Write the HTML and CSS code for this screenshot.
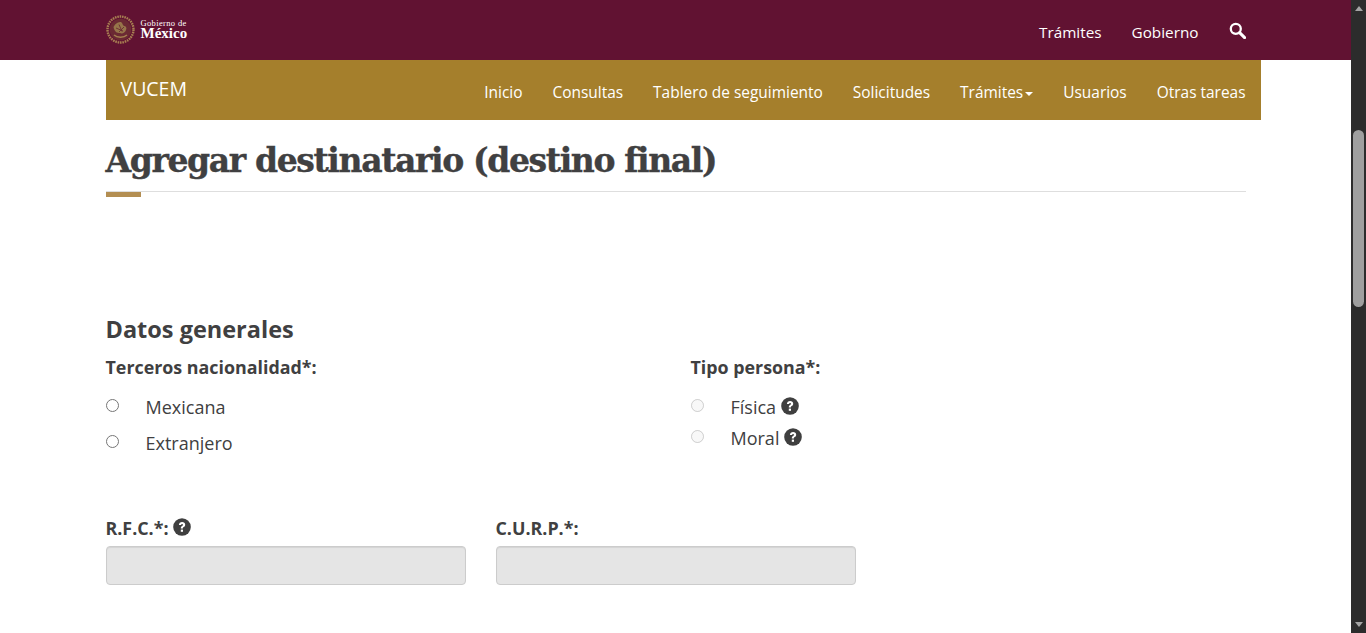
FILE: index.html
```html
<!DOCTYPE html>
<html lang="es">
<head>
<meta charset="utf-8">
<title>Agregar destinatario</title>
<link rel="stylesheet" href="styles.css">
</head>
<body>
<div class="window">
  <div class="page">
    <header class="topbar">
      <div class="topbar-inner">
        <a class="logo" href="#">
          <svg class="seal" width="29" height="29" viewBox="0 0 29 29" aria-hidden="true">
            <circle cx="14.5" cy="14.5" r="13" fill="none" stroke="#a87f52" stroke-width="2.4" stroke-dasharray="1.6 .8"/>
            <circle cx="14.5" cy="14.5" r="10.8" fill="#6b2a33"/>
            <path d="M8 20c3 3 10 3 13 0" fill="none" stroke="#a5814f" stroke-width="1.4"/>
            <path d="M7.5 12c2-4 5-5 7.500-5 2 1 1 3 3 4 2 0 3 2 2 4-1 3-4 4-6 3-3 0-5.500-1-6.500-6z" fill="#96754a"/>
            <path d="M10 13l7 3M13 9.500l3 7M18 12l-5 5" stroke="#6b2a33" stroke-width=".9"/>
          </svg>
          <span class="logo-text"><small>Gobierno de</small><b>México</b></span>
        </a>
        <nav class="topnav">
          <a href="#">Trámites</a>
          <a href="#">Gobierno</a>
          <a href="#" class="search" aria-label="Buscar">
            <svg width="17" height="17" viewBox="0 0 17 17" aria-hidden="true">
              <circle cx="6.8" cy="6.8" r="5" fill="none" stroke="#fff" stroke-width="2.3"/>
              <path d="M10.6 10.6l5 5" stroke="#fff" stroke-width="3" stroke-linecap="round"/>
            </svg>
          </a>
        </nav>
      </div>
    </header>

    <div class="container">
      <nav class="subnav">
        <a class="brand" href="#">VUCEM</a>
        <div class="sublinks">
          <a href="#">Inicio</a>
          <a href="#">Consultas</a>
          <a href="#">Tablero de seguimiento</a>
          <a href="#">Solicitudes</a>
          <a href="#">Trámites<i class="caret"></i></a>
          <a href="#">Usuarios</a>
          <a href="#">Otras tareas</a>
        </div>
      </nav>

      <main class="content">
        <h1 class="title">Agregar destinatario (destino final)</h1>
        <div class="rule"><span></span></div>

        <h2 class="section">Datos generales</h2>

        <div class="radio-row">
          <fieldset class="group">
            <label class="lbl">Terceros nacionalidad*:</label>
            <label class="radio"><input type="radio" name="nac"><span>Mexicana</span></label>
            <label class="radio"><input type="radio" name="nac"><span>Extranjero</span></label>
          </fieldset>
          <fieldset class="group tight">
            <label class="lbl">Tipo persona*:</label>
            <label class="radio"><input type="radio" name="tipo" disabled><span>Física</span>
              <svg class="help" viewBox="0 0 18 18" aria-hidden="true"><use href="#q"/></svg></label>
            <label class="radio"><input type="radio" name="tipo" disabled><span>Moral</span>
              <svg class="help" viewBox="0 0 18 18" aria-hidden="true"><use href="#q"/></svg></label>
          </fieldset>
        </div>

        <div class="field-row">
          <div class="field">
            <label class="lbl">R.F.C.*: <svg class="help" viewBox="0 0 18 18" aria-hidden="true"><use href="#q"/></svg></label>
            <input class="input" type="text" disabled>
          </div>
          <div class="field">
            <label class="lbl">C.U.R.P.*:</label>
            <input class="input" type="text" disabled>
          </div>
        </div>
      </main>
    </div>
  </div>

  <div class="scrollbar" aria-hidden="true">
    <i class="arrow up"></i>
    <div class="track"><div class="thumb"></div></div>
    <i class="arrow down"></i>
  </div>
</div>

<svg width="0" height="0" class="defs" aria-hidden="true">
  <symbol id="q" viewBox="0 0 18 18">
    <circle cx="9" cy="9" r="8.800" fill="#3f3f3f"/>
    <path d="M5.9 7c.1-1.900 1.400-2.900 3.200-2.900 1.800 0 3.100 1 3.100 2.600 0 1.200-.7 1.800-1.500 2.300-.6.4-.8.6-.8 1.200v.4H7.800v-.6c0-1.100.5-1.600 1.200-2.100.6-.4 1-.7 1-1.200 0-.5-.4-.8-.9-.8-.6 0-1 .4-1.100 1.100z" fill="#fff"/>
    <rect x="7.8" y="11.600" width="2.200" height="2.200" fill="#fff"/>
  </symbol>
</svg>
</body>
</html>
```
FILE: styles.css
```css
* { box-sizing: border-box; }
html, body { margin: 0; padding: 0; height: 100%; overflow: hidden; }
body { font-family: "Open Sans", "Noto Sans", sans-serif; font-size: 18px; color: #404041; background: #fff; }
a { color: inherit; text-decoration: none; }
.defs { position: absolute; }

.window { display: flex; height: 633px; }
.page { flex: 0 0 1351px; width: 1351px; overflow: hidden; }

.topbar { background: #611232; height: 60px; }
.topbar-inner { width: 1170px; height: 60px; margin: 0 auto; padding: 0 15px; display: flex; align-items: center; justify-content: space-between; }
.logo { display: flex; align-items: center; gap: 6px; color: #fff; margin-top: -1px; }
.seal { display: block; }
.logo-text { display: flex; flex-direction: column; font-family: "Liberation Serif", serif; line-height: 1; }
.logo-text small { font-size: 8.500px; line-height: 8px; letter-spacing: .35px; white-space: nowrap; }
.logo-text b { font-size: 15px; line-height: 13px; font-weight: 700; letter-spacing: 0; }

.topnav { display: flex; align-items: center; gap: 30px; font-size: 15.300px; color: #fff; margin-top: 4px; }
.topnav .search { display: block; height: 17px; margin-top: -4px; }
.topnav .search svg { display: block; }

.container { width: 1170px; margin: 0 auto; padding: 0 15px; }
.subnav { height: 60px; width: 1155px; background: #a57f2c; color: #fff; display: flex; justify-content: space-between; padding: 0 15px; font-size: 15.450px; }
.brand { font-size: 19.500px; line-height: 27px; padding-top: 15px; }
.sublinks { display: flex; gap: 30px; padding-top: 21px; line-height: 22px; }
.caret { display: inline-block; width: 0; height: 0; margin-left: 2px; vertical-align: middle; border-top: 4px solid #fff; border-left: 4px solid transparent; border-right: 4px solid transparent; }

.content { width: 1140px; }
.title { margin: 16px 0 0; height: 50px; font-family: "DejaVu Serif", serif; font-weight: 700; font-size: 33px; line-height: 50px; letter-spacing: -1.370px; -webkit-text-stroke: .4px #404041; color: #404041; white-space: nowrap; }
.rule { height: 1px; background: #dedede; margin-top: 5px; position: relative; }
.rule span { position: absolute; left: 0; top: 1px; width: 35px; height: 5px; background: #b38e52; }

.section { margin: 122px 0 0; font-size: 23.500px; line-height: 30px; font-weight: 700; color: #404041; }

.lbl { display: block; font-size: 17.850px; line-height: 22px; font-weight: 700; color: #404041; }

.radio-row { display: grid; grid-template-columns: 555px 555px; column-gap: 30px; margin-top: 12px; }
.group { border: 0; margin: 0; padding: 0; }
.group .lbl { margin-bottom: 16px; }
.radio { display: flex; align-items: center; height: 26px; margin-bottom: 10px; font-size: 18px; line-height: 26px; color: #404041; }
.radio input { margin: -3px 27px 0 0; width: 13px; height: 13px; flex: none; }
.radio span { display: block; }
.radio .help { margin: -2px 0 0 5px; }
.tight .radio { margin-bottom: 5px; }

.help { display: inline-block; width: 18px; height: 18px; vertical-align: -1px; }

.field-row { display: grid; grid-template-columns: 360px 360px; column-gap: 30px; margin-top: 51px; }
.field .lbl { margin-bottom: 6px; height: 23px; }
.input { display: block; width: 360px; height: 39px; background: #e5e5e5; border: 1px solid #ccc; border-radius: 4px; box-shadow: inset 0 1px 1px rgba(0,0,0,.075); padding: 0; }

.scrollbar { flex: 0 0 15px; width: 15px; height: 633px; background: #2c2c2c; display: flex; flex-direction: column; align-items: center; }
.track { flex: 1; width: 100%; padding-top: 113px; }
.thumb { width: 11px; height: 177px; margin: 0 auto; background: #9f9f9f; border-radius: 6px; }
.arrow { display: block; width: 0; height: 0; border-left: 4px solid transparent; border-right: 4px solid transparent; flex: none; margin: 6px 0; }
.arrow.up { border-bottom: 5px solid #a5a5a5; }
.arrow.down { border-top: 5px solid #a5a5a5; }
```
